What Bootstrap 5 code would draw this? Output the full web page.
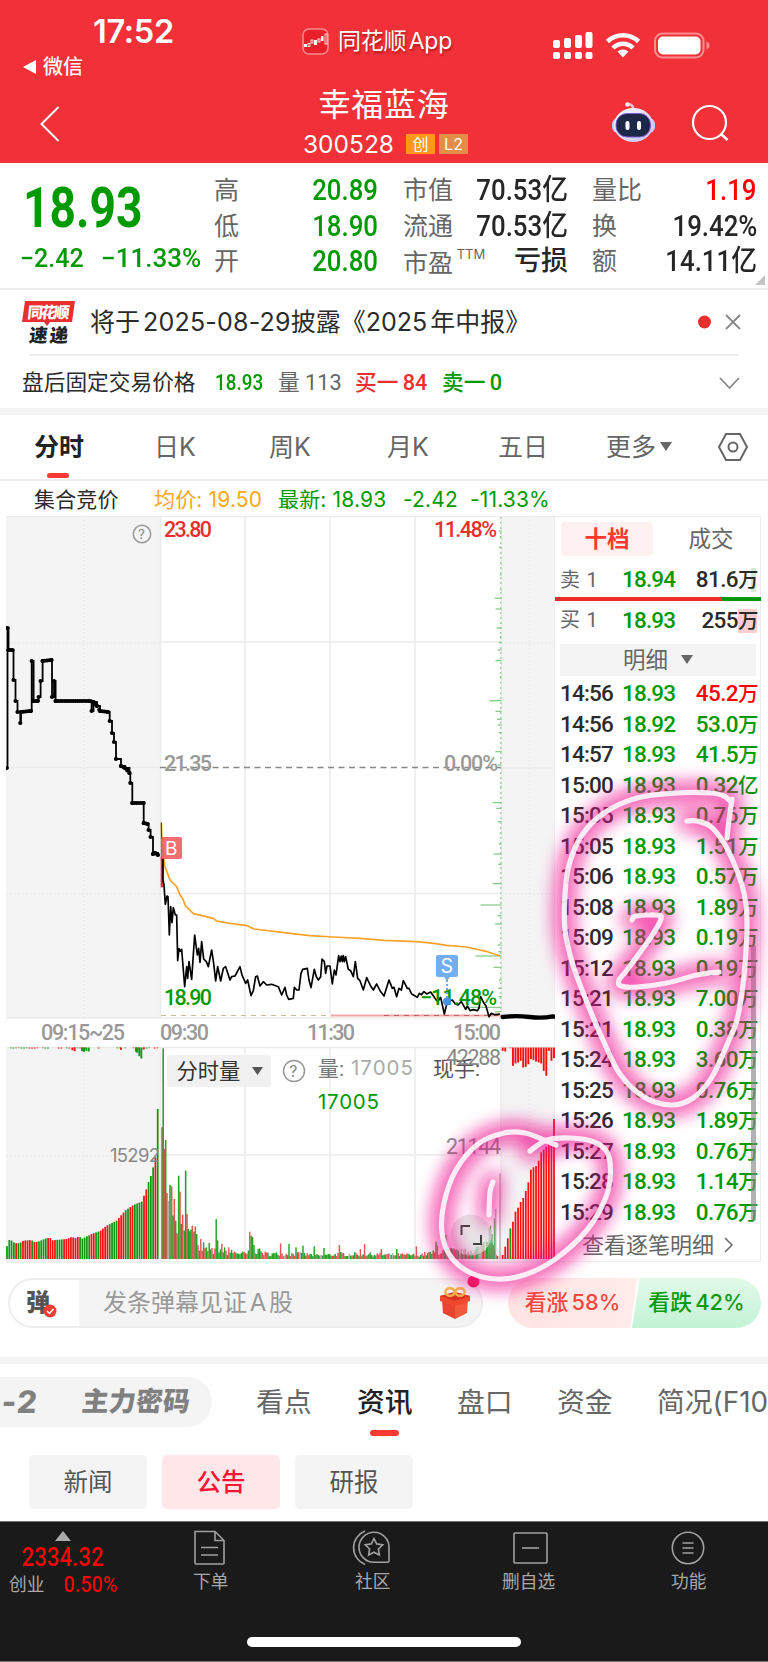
<!DOCTYPE html>
<html lang="zh-CN">
<head>
<meta charset="utf-8">
<meta name="viewport" content="width=device-width, initial-scale=1">
<title>幸福蓝海 300528</title>
<link href="https://cdn.jsdelivr.net/npm/bootstrap@5.3.0/dist/css/bootstrap.min.css" rel="stylesheet">
<style>
:root{--up:#e93030;--hot:#f00;--down:#009900;--ink:#2b2b2b;--mute:#666;--line:#eee;--soft:#f4f4f4}
body{width:768px;height:1662px;overflow:hidden;background:#fff;color:var(--ink);font-family:Inter,"Noto Sans CJK SC",sans-serif;line-height:1;position:relative}
svg{display:block;flex:none}
.t-down{color:var(--down)}.t-up{color:var(--up)}.t-hot{color:var(--hot)}.t-mute{color:var(--mute)}.t-ink{color:#262626}
.din{font-family:Roboto,"Noto Sans CJK SC",sans-serif;font-weight:500;display:inline-block;white-space:nowrap}
.from-l{transform-origin:0 50%}.from-r{transform-origin:100% 50%}
/* header */
.top{height:163px;background:#f23038;color:#fff}
.status{height:82px;grid-template-columns:302px 250px 1fr;display:grid}
.clock{font-size:32.5px;font-weight:600;letter-spacing:-.3px;padding-left:93px;height:35px;margin-top:15px}
.back-app{height:24px;font-size:20px;padding-left:23px;gap:7px;margin-top:5px;font-weight:500}
.app-name{font-size:23px;gap:9px;height:82px;text-shadow:1px 2px 2px rgba(120,0,0,.5);word-spacing:-4px;letter-spacing:-.2px}
.gauges{padding-top:32px}
.titlebar{height:81px;display:grid;grid-template-columns:263px 242px 263px}
.stock-name{font-size:32px;letter-spacing:.8px;margin-top:4px;line-height:37px}
.stock-code{font-size:24.5px;gap:4px;margin-top:8px;line-height:26px;padding-left:3px}
.tagbox{width:29px;height:20px;font-size:16px;line-height:20px;text-align:center;background:#ff9818;color:#fff}
.tagbox.l2{background:#e48c49}
/* quote */
.quote{height:127px;border-bottom:2px solid var(--line);display:grid;grid-template-columns:214px 164px 25px 165px 24px 165px;position:relative}
.last{font-size:55px;font-weight:700;color:var(--down);transform:scaleX(.84);margin:18px 0 0 23px;line-height:55px}
.chg{font-size:25.5px;color:var(--down);margin:10px 0 0 20px;display:flex}
.qcol{padding-top:10px}
.qcol>div{height:35.5px;display:flex;align-items:center;justify-content:space-between;font-size:25px;color:var(--mute);white-space:nowrap}
.qcol .din{font-size:29px;transform:scaleX(.89)}
.qcol .cn{transform:none;font-size:27px}
.ttm{font-size:13px;position:relative;top:-13px}
.corner{position:absolute;right:3px;bottom:3px}
/* notices */
.notice{height:64px;margin-left:22px;font-size:25px}
.notice .msg{margin-left:15px;width:608px;white-space:nowrap;word-spacing:-4px}
.thin{height:2px;background:var(--line);margin:0 29px}
.fixedrow{height:52px;padding:2px 28px 0 22px;font-size:21.7px}
.band{height:7px;background:var(--soft)}
/* chart tabs */
.ktabs{height:66px;border-bottom:2px solid var(--line);display:grid;grid-template-columns:34px 120px 115px 118px 111px 108px 111px 1fr;align-items:center;font-size:25px;color:var(--mute)}
.ktabs .on{color:#222;font-weight:600;position:relative}
.ktabs .on::after{content:"";position:absolute;left:13px;top:38px;width:22px;height:5px;border-radius:3px;background:#f93a32}
.legend-row{height:35px;font-size:21px;display:grid;grid-template-columns:34px 120px 124px 125px 67px 1fr;align-items:center;white-space:nowrap;letter-spacing:.15px}
.legend-row>*{padding-top:1px}
/* order book */
.book{width:206px;border:1px solid var(--line);border-left:0;height:746px}
.bk-tabs{height:45px;padding:5px 0 0 6px}
.bk-tabs>div{height:34px;width:92px;font-size:22.5px;line-height:34px;text-align:center;border-radius:4px}
.bk-tabs .on{color:#f93a32;background:#fff1f1;font-weight:600}
.lv,.tick{display:grid;grid-template-columns:62px 60px 76.5px;padding-left:5px;align-items:center;font-size:22.5px;font-family:Roboto,"Noto Sans CJK SC",sans-serif;font-weight:500;letter-spacing:-.85px;color:var(--ink)}
.lv>:last-child,.tick>:last-child{text-align:right;letter-spacing:-.6px;white-space:nowrap}
.lv i,.tick i{font-style:normal;font-size:20.5px;font-weight:500;letter-spacing:0}
.lv{height:36px}
.lv>:first-child{font-size:20px;font-weight:400;color:var(--mute);letter-spacing:.8px}
.bid i{background:linear-gradient(90deg,#fbcfcf 90%,transparent 90%)}.ask i{background:linear-gradient(90deg,transparent 60%,#cfeccf 60%,#cfeccf 88%,transparent 88%)}
.tick{height:30.5px}
.balance{height:4px;margin-right:-1px}
.more{height:32px;margin:5px 4px 2px 5px;background:var(--soft);font-size:22.5px;gap:13px;color:var(--mute)}
.book-foot{height:33px;font-size:22px;color:var(--mute);gap:10px;padding:3px 0 0 27px}
/* comments */
.talk{height:50px;margin:15px 7px 0 8px;word-spacing:-4px}
.talk-pill{width:475px;height:50px;border-radius:25px;border:2px solid var(--line);background:var(--soft);overflow:hidden;font-size:24px;color:#999}
.talk-pill .who{width:69px;height:46px;background:#fff;color:#555;font-weight:900;font-size:24px;padding-left:16px}
.vote{height:50px;width:129px;font-size:21.8px;font-weight:500;white-space:nowrap;word-spacing:-2.500px}
.vote.bull{background:linear-gradient(90deg,#ffe4e2,#ffeceb);color:#f5483f;border-radius:25px 0 0 25px;clip-path:polygon(0 0,100% 0,95% 100%,0 100%)}
.vote.bear{background:linear-gradient(#e2f9ea,#c3f3d5);color:#0a9a0a;border-radius:0 25px 25px 0;margin-left:-5px;clip-path:polygon(6% 0,100% 0,100% 100%,0 100%)}
/* info tabs */
.itabs{height:91px;display:grid;grid-template-columns:256px 101px 100px 100px 100px 1fr;font-size:27.8px;color:var(--mute);overflow:hidden;white-space:nowrap}
.itabs>div{line-height:50px;margin-top:13px}
.promo{background:var(--soft);width:212px;height:50px;border-radius:0 25px 25px 0;font-weight:800;color:#808080;display:grid;grid-template-columns:82px 1fr;font-size:27px}
.promo span{transform:skewX(-6deg)}
.promo span:first-child{font-size:31px;letter-spacing:1px;padding-left:2px}
.itabs .on{color:#222;font-weight:500;position:relative}
.itabs .on::after{content:"";position:absolute;left:13px;top:53px;width:29px;height:6px;border-radius:3px;background:#f93a32}
.chips{gap:15px;padding-left:29px;height:66px}
.chips>div{width:118px;height:54px;border-radius:5px;background:var(--soft);text-align:center;line-height:55px;font-size:24.5px;color:#555}
.chips .on{background:#ffe7e9;color:#fb1433;font-weight:500}
/* bottom */
.dock{height:141px;background:#1a1a1a;color:#a8a8a8;border-bottom:1px solid #777;border-top:1px solid #777;position:relative}
.dock-grid{display:grid;grid-template-columns:131px 161px 160px 157px 159px;font-size:17.7px}
.dock-grid .cell{height:76px}
.dock-grid .cap{margin-top:7px}
.home{width:274px;height:10px;border-radius:5px;background:#fff;margin:39px 0 0 247px}
.ink-layer{position:absolute;left:0;top:0;pointer-events:none}
</style>
</head>
<body>
<header class="top">
  <div class="status">
    <div>
      <div class="clock d-flex align-items-center">17:52</div>
      <div class="back-app d-flex align-items-center"><svg width="13" height="16"><path d="M13 1v14L0 8z" fill="#fff"/></svg>微信</div>
    </div>
    <div class="app-name d-flex align-items-center">
      <svg width="27" height="27" viewBox="0 0 27 27"><rect x="1" y="1" width="25" height="25" rx="6" fill="#e8202a" stroke="#f88d90" stroke-width="1.5"/><g fill="#fff"><rect x="2" y="16" width="3" height="3"/><rect x="12" y="12" width="3" height="5"/><rect x="19" y="8" width="2.500" height="5"/></g><g fill="none" stroke="#fff" stroke-width=".8"><rect x="6" y="15.500" width="2" height="3"/><rect x="9" y="12" width="2" height="3"/><rect x="16" y="11" width="2" height="3"/><rect x="23" y="6" width="2" height="10"/></g></svg>
      <span>同花顺 App</span>
    </div>
    <div class="gauges">
      <svg width="180" height="30" viewBox="552 32 180 30"><g fill="#fff"><rect x="553" y="40" width="7" height="8" rx="2"/><rect x="564" y="38" width="7" height="10" rx="2"/><rect x="575" y="35" width="7" height="13" rx="2"/><rect x="585.500" y="32" width="7" height="16" rx="2"/><rect x="553" y="52" width="7" height="7" rx="2"/><rect x="564" y="52" width="7" height="7" rx="2"/><rect x="575" y="52" width="7" height="7" rx="2"/><rect x="585.500" y="52" width="7" height="7" rx="2"/><path d="M623 57.500l-5.500-6a8.500 8.500 0 0 1 11 0z"/></g><g fill="none" stroke="#fff" stroke-width="4.600"><path d="M607.500 41.500a22.500 22.500 0 0 1 31 0"/><path d="M613 48a14 14 0 0 1 20 0"/></g><rect x="655" y="33.500" width="48.500" height="24" rx="7.500" fill="none" stroke="#f98d91" stroke-width="2"/><rect x="658" y="36.500" width="42.500" height="18" rx="5" fill="#fff"/><path d="M706.500 41.500q3 1 3 4t-3 4z" fill="#f98d91"/></svg>
    </div>
  </div>
  <div class="titlebar">
    <div class="pt-4"><svg width="70" height="36" viewBox="0 0 70 36"><path d="M58.500 1L41.500 18l17 17" fill="none" stroke="#fff" stroke-width="2"/></svg></div>
    <div class="text-center">
      <div class="stock-name">幸福蓝海</div>
      <div class="stock-code d-flex align-items-center justify-content-center"><span class="me-2">300528</span><span class="tagbox">创</span><span class="tagbox l2">L2</span></div>
    </div>
    <div class="d-flex">
      <svg width="263" height="81" viewBox="505 82 263 81"><defs><linearGradient id="bot" x2="1" y2="1"><stop stop-color="#fff"/><stop offset="1" stop-color="#c6c0ee"/></linearGradient></defs><path d="M633 110q1-6-6-6" fill="none" stroke="#f7c3cd" stroke-width="2.500"/><circle cx="627.500" cy="104.500" r="2.300" fill="#efe8ff"/><rect x="612" y="118" width="43" height="15" rx="6" fill="#cbc8f3"/><ellipse cx="633.500" cy="125" rx="19.500" ry="17" fill="url(#bot)"/><rect x="616" y="113.500" width="34.500" height="23.500" rx="11" fill="#1d2747" stroke="#7b5cd6"/><rect x="625.500" y="121" width="4" height="9" rx="2" fill="#fff"/><rect x="637" y="121" width="4" height="9" rx="2" fill="#fff"/><circle cx="709.500" cy="122.500" r="16.500" fill="none" stroke="#fff" stroke-width="2.200"/><path d="M720.500 133.500l7 6.500" stroke="#fff" stroke-width="2.500"/></svg>
    </div>
  </div>
</header>

<section class="quote">
  <div><div class="din last from-l">18.93</div>
    <div class="chg"><span class="din from-l" style="width:81px;transform:scaleX(.98)">−2.42</span><span class="din from-l" style="transform:scaleX(1.02)">−11.33%</span></div></div>
  <div class="qcol"><div>高<span class="din from-r t-down">20.89</span></div><div>低<span class="din from-r t-down">18.90</span></div><div>开<span class="din from-r t-down">20.80</span></div></div>
  <div></div>
  <div class="qcol"><div>市值<span class="din from-r t-ink">70.53亿</span></div><div>流通<span class="din from-r t-ink">70.53亿</span></div><div><span class="pt-1">市盈<span class="ttm"> TTM</span></span><span class="din cn t-ink">亏损</span></div></div>
  <div></div>
  <div class="qcol"><div>量比<span class="din from-r t-hot">1.19</span></div><div>换<span class="din from-r t-ink">19.42%</span></div><div>额<span class="din from-r t-ink">14.11亿</span></div></div>
  <svg class="corner" width="10" height="10"><path d="M10 0v10H0z" fill="#c4c4c4"/></svg>
</section>

<section class="notice d-flex align-items-center">
  <svg width="53" height="45" viewBox="0 0 53 45"><path d="M3 1h50l-3 21H28l-3 4-3-4H0z" fill="#e93030"/><g font-family="Noto Sans CJK SC" font-weight="900"><text transform="skewX(-6)" x="7" y="18" font-size="15.500" fill="#fff" textLength="42">同花顺</text><text transform="skewX(-6)" x="11" y="42" font-size="18.500" fill="#222" textLength="39">速递</text></g></svg>
  <div class="msg">将于 <span style="letter-spacing:.2px">2025-08-29</span>披露《2025 年中报》</div>
  <svg width="44" height="16" viewBox="0 0 44 16"><circle cx="6.500" cy="8" r="6.500" fill="#e93030"/><path d="M28 1l14 14M42 1L28 15" stroke="#888" stroke-width="1.800"/></svg>
</section>
<div class="thin"></div>
<section class="fixedrow d-flex align-items-center">
  <span style="width:193px">盘后固定交易价格</span>
  <span class="din t-down from-l" style="width:63px;transform:scaleX(.87)">18.93</span>
  <span class="din t-mute" style="width:77px;font-weight:400">量 113</span>
  <span class="din t-up" style="width:87px;word-spacing:-1px">买一 84</span>
  <span class="din t-down" style="word-spacing:-1px">卖一 0</span>
  <svg class="ms-auto" width="21" height="13"><path d="M1 1l9.500 10L20 1" fill="none" stroke="#888" stroke-width="1.800"/></svg>
</section>
<div class="band"></div>

<nav class="ktabs"><i></i><div class="on">分时</div><div>日K</div><div>周K</div><div>月K</div><div>五日</div><div class="d-flex align-items-center gap-1">更多<svg width="12" height="10"><path d="M0 0h12L6 9z" fill="#666"/></svg></div>
  <svg width="32" height="30" viewBox="0 0 32 30"><path d="M9 2h14l7 13-7 13H9L2 15z" fill="none" stroke="#666" stroke-width="2"/><circle cx="16" cy="15" r="4.500" fill="none" stroke="#666" stroke-width="2"/></svg></nav>
<div class="legend-row"><i></i><span>集合竞价</span><span style="color:#f7a81d">均价: 19.50</span><span class="t-down">最新: 18.93</span><span class="t-down">-2.42</span><span class="t-down">-11.33%</span></div>

<main class="d-flex" style="padding-left:6px">
  <svg id="chart" width="549" height="747" viewBox="6 516 549 747" font-family="Roboto, 'Noto Sans CJK SC', sans-serif">
    <g fill="#f4f4f4"><path d="M6 516h154.500v502H6zM501 516h54v502h-54zM6 1047h154.500v214H6zM501 1047h54v214h-54z"/></g>
    <g fill="none" stroke="#ececec" stroke-width="1.500"><path d="M6 516.500h549M6 1018h549M6 1047.500h549M6 1262h549M160.500 516v502M245 516v502M330 516v502M415 516v502M501.500 516v502M160.500 642h341M160.500 893.500h341M160.500 1047v215M245 1047v215M330 1047v215M415 1047v215M501 1047v215M160.500 1155h341M6 767.500h154M501 768h54M555 516v747"/><path stroke-dasharray="2 2" d="M84 516v502M6 643h154M6 894h154M529.500 516v502M501 643h54M501 894h54M84 1047v214M529.500 1047v214M6 1156h154M501 1156h54"/></g>
    <g font-size="21.500" font-weight="500">
      <path d="M160 767.500h341" stroke="#888" stroke-width="1.300" stroke-dasharray="6 4.500"/>
      <text x="164" y="537" fill="#e93030" textLength="48">23.80</text><text x="434" y="537" fill="#e93030" textLength="63">11.48%</text>
      <text x="164" y="771" fill="#999" textLength="48">21.35</text><text x="444" y="771" fill="#999" textLength="54">0.00%</text>
      <text x="164" y="1005" fill="#009900" textLength="48">18.90</text>
      <g fill="#999"><text x="41" y="1040" textLength="84">09:15~25</text><text x="160" y="1040" textLength="49">09:30</text><text x="307" y="1040" textLength="48">11:30</text><text x="453" y="1040" textLength="48">15:00</text></g>
    </g>
    <path d="M161 1015.500h170" stroke="#cdbb93" stroke-width="1.200" stroke-dasharray="5 5"/><path d="M331 1015.500h170" stroke="#f0a5a5" stroke-width="1.800"/><path d="M384 1015.500h117" stroke="#c06060" stroke-width="1" stroke-dasharray="5 5"/>
    <g id="ladder" stroke="#8acb8a" stroke-width="1.300"></g>
    <g id="bars"></g>
    <path id="auction" fill="none" stroke="#000" stroke-width="1.800"/><g id="dots"></g>
    <g transform="translate(0 760) scale(.33333)" fill="none" stroke-linejoin="round">
      <path id="avg" stroke="#f7a32a" stroke-width="5"/><path d="M484 187v115" stroke="#333" stroke-width="3"/><path d="M486 290v92" stroke="#e93030" stroke-width="8"/><path id="price" stroke="#000" stroke-width="5"/>
      <path d="M1508 771q40-5 80 0t70-2q20 3 29-6" stroke="#000" stroke-width="13" stroke-linecap="round"/>
    </g>
    <text x="420" y="1005" fill="#009900" font-size="21.500" font-weight="500" textLength="77">−11.48%</text>
    <rect x="161" y="837" width="21" height="22" rx="2" fill="#f0595c" opacity=".88"/><text x="165" y="855" font-size="19" fill="#fff" font-family="Inter">B</text>
    <path d="M447 976v24" stroke="#6aa5ef" stroke-width="2" stroke-dasharray="2 2"/><circle cx="447" cy="1001.500" r="4" fill="#4c8fe6"/><path d="M436 957a2 2 0 0 1 2-2h18a2 2 0 0 1 2 2v18a2 2 0 0 1-2 2h-6l-3 4-3-4h-6a2 2 0 0 1-2-2z" fill="#73aef3"/><text x="440.500" y="973" font-size="19.500" fill="#fff" font-family="Inter">S</text>
    <g fill="none" stroke="#999" stroke-width="1.500"><circle cx="142" cy="534" r="8.700"/><circle cx="294" cy="1071" r="10.500"/></g>
    <g fill="#888" font-family="Inter"><text x="138" y="539" font-size="13.500">?</text><text x="289.300" y="1077" font-size="16">?</text></g>
    <rect x="167" y="1055" width="104" height="32" rx="3" fill="#f1f1f1"/><text x="176.500" y="1079" font-size="21.300" fill="#333">分时量</text><path d="M252 1067h11l-5.500 8z" fill="#555"/>
    <g font-size="21"><text x="318" y="1076" fill="#777">量:</text><text x="351" y="1075" fill="#aaa" font-family="Inter" font-size="20.500" textLength="62">17005</text><text x="433" y="1076" fill="#555">现手:</text><text x="318" y="1109" fill="#009900" font-family="Inter" font-size="20.500" textLength="61">17005</text></g>
    <g fill="#888"><text x="446" y="1065" font-size="21.500" textLength="55">42288</text><text x="446" y="1154" font-size="21.500" textLength="55">21144</text><text x="110" y="1162" font-size="18.500" font-family="Inter" textLength="50">15292</text></g>
    <circle cx="471" cy="1235" r="20.500" fill="#ddd" opacity=".72"/><path d="M461.500 1235v-9h8.500M473 1244h8v-9" fill="none" stroke="#444" stroke-width="2"/>
  </svg>
  <aside class="book">
    <div class="bk-tabs d-flex"><div class="on">十档</div><div class="t-mute" style="margin-left:12px">成交</div></div>
    <div class="lv ask" style="height:35px"><span>卖 1</span><span class="t-down">18.94</span><span>81.6<i>万</i></span></div>
    <div class="balance d-flex"><div style="width:81%;background:#ee2e2e"></div><div style="width:19%;background:#0a960a"></div></div>
    <div class="lv bid" style="height:38px"><span>买 1</span><span class="t-down">18.93</span><span>255<i>万</i></span></div>
    <div class="more d-flex align-items-center justify-content-center">明细<svg width="12" height="10"><path d="M0 0h12L6 9z" fill="#666"/></svg></div>
    <div id="ticks"></div>
    <div class="book-foot d-flex align-items-center">查看逐笔明细<svg width="9" height="16"><path d="M1 1l7 7-7 7" fill="none" stroke="#666" stroke-width="1.500"/></svg></div>
  </aside>
</main>

<section class="talk d-flex">
  <div class="talk-pill d-flex align-items-center">
    <div class="who d-flex align-items-center"><span>弹</span><svg width="14" height="14" style="margin:16px 0 0 -7px"><circle cx="7" cy="7" r="6.500" fill="#f03c2e"/><path d="M4 7l2.500 2.500L10.500 5" fill="none" stroke="#fff" stroke-width="1.500"/></svg></div>
    <span style="margin-left:24px;width:336px">发条弹幕见证 A 股</span>
    <svg width="32" height="34" viewBox="0 0 32 34"><path d="M3 14l13 4v15L4 27z" fill="#e8432c"/><path d="M29 14l-13 4v15l12-6z" fill="#f2583a"/><path d="M1 10l15-4 15 4v5l-15 5-15-5z" fill="#f0492e"/><path d="M1 10l15-4 15 4-15 5z" fill="#d83422"/><g fill="none" stroke="#f5b24a" stroke-width="2.500"><ellipse cx="11" cy="6" rx="4.500" ry="3.800"/><ellipse cx="21" cy="6" rx="4.500" ry="3.800"/></g></svg>
  </div>
  <div class="vote bull d-flex align-items-center justify-content-center" style="margin-left:25px">看涨 58%</div>
  <div class="vote bear d-flex align-items-center justify-content-center">看跌 42%</div>
</section>
<div class="band" style="margin-top:29px"></div>

<nav class="itabs"><div class="promo"><span>-2</span><span>主力密码</span></div><div>看点</div><div class="on">资讯</div><div>盘口</div><div>资金</div><div>简况(F10)</div></nav>
<div class="chips d-flex"><div>新闻</div><div class="on">公告</div><div>研报</div></div>

<footer class="dock">
  <div class="dock-grid">
    <div class="cell"><svg style="margin:9px 0 0 55px" width="16" height="10"><path d="M8 0l8 10H0z" fill="#aaa"/></svg>
      <div class="din t-hot from-l d-block" style="font-size:25px;margin:4px 0 0 22px;transform:scaleX(.89);height:27px">2334.32</div>
      <div class="d-flex align-items-center" style="padding:2px 0 0 9px"><span style="width:55px">创业</span><span class="din t-hot from-l" style="font-size:21.500px;transform:scaleX(.92)">0.50%</span></div></div>
    <div class="cell" style="padding:7px 0 0 62px"><svg width="34" height="37" fill="none" stroke="#a0a0a0" stroke-width="1.600"><path d="M2 2.500h20l9 9V34a1 1 0 0 1-1 1H3a1 1 0 0 1-1-1zM22 2.500v9h9M8 18.500h17M8 26h17"/></svg><div class="cap">下单</div></div>
    <div class="cell" style="padding:7px 0 0 60px"><svg width="40" height="37" fill="none" stroke="#a0a0a0" stroke-width="1.600"><path d="M37 18.500a15 15 0 1 0-15 14.800h13.500q1.500 0 1.500-1.500zM13 2A18 18 0 0 0 13 35.500"/><path d="M22 9.500l2.700 5.400 6 .9-4.300 4.200 1 6-5.400-2.800-5.400 2.800 1-6-4.300-4.200 6-.9z"/></svg><div class="cap" style="padding-left:3px">社区</div></div>
    <div class="cell" style="padding:7px 0 0 50px"><svg class="ms-2" width="40" height="37" fill="none" stroke="#a0a0a0" stroke-width="1.600"><rect x="4" y="4" width="33" height="30" rx="1"/><path d="M12 19h17"/></svg><div class="cap">删自选</div></div>
    <div class="cell" style="padding:7px 0 0 62px"><svg width="36" height="37" fill="none" stroke="#a0a0a0" stroke-width="1.600"><circle cx="17" cy="19" r="15.700"/><path d="M11.500 14h11M11.500 19h11M11.500 24h11"/></svg><div class="cap">功能</div></div>
  </div>
  <div class="home"></div>
</footer>

<svg class="ink-layer" width="768" height="1662">
  <defs><filter id="glow" x="-20%" y="-20%" width="140%" height="140%"><feGaussianBlur stdDeviation="9"/></filter></defs>
  <rect x="751" y="945" width="5" height="276" rx="2" fill="#888" opacity=".65"/>
  <circle cx="473.500" cy="1281.500" r="6" fill="#f01c4c"/>
  <g id="halo" fill="none" stroke="#f0108f" stroke-width="20" stroke-linecap="round" stroke-linejoin="round" filter="url(#glow)" opacity=".74"></g>
  <g id="pen" fill="none" stroke="#fff" stroke-width="5.200" stroke-linecap="round" stroke-linejoin="round" opacity=".86"></g>
</svg>

<script>
const $ = id => document.getElementById(id);
const rows = `14:56 18.93 45.2万 u|14:56 18.92 53.0万|14:57 18.93 41.5万|15:00 18.93 0.32亿|15:05 18.93 0.76万|15:05 18.93 1.51万|15:06 18.93 0.57万|15:08 18.93 1.89万|15:09 18.93 0.19万|15:12 18.93 0.19万|15:21 18.93 7.00万|15:21 18.93 0.38万|15:24 18.93 3.60万|15:25 18.93 0.76万|15:26 18.93 1.89万|15:27 18.93 0.76万|15:28 18.93 1.14万|15:29 18.93 0.76万`;
$('ticks').innerHTML = rows.split('|').map(r => { const [t,p,v,u] = r.split(' ');
  return `<div class="tick"><span>${t}</span><span class="t-down">${p}</span><span class="${u?'t-hot':'t-down'}">${v.slice(0,-1)}<i>${v.slice(-1)}</i></span></div>`}).join('');

const line = s => 'M' + s.trim().replace(/ /g,'L');
/* call auction steps */
const au = '6.7,768 7.5,628 8.5,650 12.5,650 13.5,680 15.5,701 17.5,712 20.3,723 21,712 31,711 31.7,661 33.6,701 37.6,701 38.6,697 40.6,681 42.6,661 51.5,660 52,697 54,681 55.6,701 90.6,701 91.6,711 93.5,702 97,706 100,711 108,712 109.7,721 112,733 114,742 116,759 121,766 125,768 129.5,773 130.3,783 132.3,803 143.6,803 143.7,823 147.6,824 148.6,830 150.6,837 153,854 155,853 158,855'.split(' ').map(p=>p.split(',').map(Number));
let d = 'M'+au[0], dots = '';
au.forEach(([x,y],i) => { if(i){ d += `H${x}V${y}`; const [a,b]=au[i-1];
  if(Math.abs(y-b)<6) for(let q=a;q<x;q+=2.2) dots+=`<circle cx="${q}" cy="${b+(y-b)*(q-a)/(x-a)}" r="2"/>`; }
  dots += `<circle cx="${x}" cy="${y}" r="2.1"/>`; });
$('auction').setAttribute('d', d); $('dots').innerHTML = dots;
/* intraday */
$('avg').setAttribute('d', line('484,190 487,270 495,320 510,360 530,380 540,405 549,418 556,437 580,461 640,475 650,483 690,490 742,497 762,507 870,520 930,527 1000,531 1080,535 1152,541 1250,545 1302,550 1340,556 1400,561 1458,574 1500,588'));
$('price').setAttribute('d', line('489,295 489,360 492,375 496,433 501,408 504,410 508,525 512,440 516,488 520,443 526,465 530,465 533,602 537,566 541,574 545,568 554,680 560,620 563,655 567,605 575,658 584,525 592,585 596,565 600,607 605,545 611,597 619,605 625,620 635,570 641,610 647,663 653,620 662,663 670,625 677,620 690,660 695,650 705,648 720,620 726,645 737,670 743,660 753,707 760,692 767,650 772,648 780,678 790,665 800,675 815,673 835,680 845,705 855,682 860,705 866,718 880,715 883,682 890,690 897,690 903,640 908,628 922,625 927,660 933,683 943,628 949,650 955,660 962,650 966,597 973,605 977,640 981,618 990,618 997,672 1003,630 1008,645 1016,587 1020,605 1024,588 1027,605 1030,587 1033,605 1037,590 1045,628 1052,632 1060,650 1066,605 1073,655 1080,662 1090,690 1100,653 1112,678 1120,690 1130,672 1140,692 1152,708 1167,660 1177,685 1182,682 1190,710 1197,685 1204,690 1210,662 1222,685 1227,685 1235,702 1252,712 1258,700 1264,704 1272,695 1280,702 1292,696 1305,715 1313,725 1322,712 1333,762 1342,725 1357,720 1366,732 1374,735 1384,725 1397,748 1402,738 1410,752 1420,749 1432,752 1437,745 1442,710 1452,730 1458,738 1467,770 1474,760 1484,764 1500,762'));
/* price-volume ladder on the right edge */
let L = [[63,8],[80,6],[112,8],[160,4],[195,5],[240,5],[265,20],[297,18],[340,4],[354,15],[380,5],[397,8],[420,12],[452,18],[500,6],[572,36],[604,18],[628,14],[645,12],[668,8],[725,18],[765,12]].map(([y,l])=>[510+y/3,l/3])
 .concat([[50,5],[98,26],[115,16],[155,12],[190,5],[222,8],[252,24],[283,10],[341,26],[405,63],[437,12],[462,20],[525,12],[545,10],[558,78],[592,24],[630,8],[655,10],[680,8],[712,100],[725,20]].map(([y,l])=>[770+y/3,l/3]));
for(let y=518;y<1012;y+=5) L.push([y,1.5]);
$('ladder').innerHTML = L.map(([y,l])=>`<path d="M${501.5-l} ${y}H501.500"/>`).join('');
/* volume */
let s = 7; const rnd = () => (s = (s*16807)%2147483647)/2147483647;
const lerp = (pts,x) => { for(let i=1;i<pts.length;i++) if(x<=pts[i][0]){const [a,b]=pts[i-1],[c,e]=pts[i];return b+(e-b)*(x-a)/(c-a)} return pts.at(-1)[1] };
const R='#fb0f0f', G='#0f980f'; let B='';
const bar=(x,h,c,w,o=1)=>B+=`<rect x="${x-w/2}" y="${1259-h}" width="${w}" height="${h}" fill="${c}" opacity="${o}"/>`;
const drop=(x,h,c,w)=>B+=`<rect x="${x-w/2}" y="1047.500" width="${w}" height="${h}" fill="${c}"/>`;
const env=[[20,35],[26,57],[34,56],[45,47],[60,48],[70,55],[95,57],[100,51],[115,52],[135,61],[150,64],[156,56],[200,60],[215,66],[230,62],[237,70],[245,60],[275,75],[300,84],[320,100],[350,115],[375,145],[400,162],[425,172],[432,190],[440,212],[447,235],[453,250],[460,277],[467,308],[473,450]];
const reds=[[42,50],[68,90],[98,112],[142,170],[188,240],[270,282],[298,323],[354,373],[386,400],[429,442],[464,470]];
for(let i=0;i<67;i++){const x=21+i*6.85; bar(x/3,lerp(env,x)/3,reds.some(r=>x>=r[0]&&x<=r[1])?R:G,1.75)}
[[486,395,1],[489.500,632,0],[493,330,1],[497,357,0],[501,198,1],[505,175,2],[510,222,0],[515,218,1],[519,130,0],[523,180,1],[527,115,0],[531,77,1],[536,250,0],[540,202,1],[544,105,0],[548,133,1],[553,85,0],[557,265,0],[561,135,1],[565,90,0],[569,83,0],[573,88,0],[577,100,1],[582,82,0],[586,98,1],[590,75,0]].forEach(([x,h,c])=>bar(x/3,h/3,[G,'#e04444','#aaa'][c],1.6,.9));
const spikes={594:42,603:60,611:50,628:48,649:120,653:56,666:45,674:35,687:35,750:82,754:70,758:66,763:42,775:30,843:47,868:45,889:35,910:40,944:38,973:33,1020:42,1083:30,1092:45,1146:30,1190:30,1248:38,1307:52,1311:40,1337:72,1341:42};
const base=[[590,40],[640,28],[700,24],[740,18],[760,34],[800,18],[900,18],[960,12],[1020,18],[1150,16],[1250,14],[1300,22],[1340,30],[1400,26],[1440,40],[1465,60],[1480,70],[1492,8]];
for(let x=594;x<1493;x+=4.2){ let h=lerp(base,x)*(.45+.75*rnd()), c=rnd(); for(const k in spikes) if(Math.abs(k-x)<2.1) h=spikes[k], c=k%3?.2:.7; if(c>.94)c='#aaa'; else c=c<.55?G:'#e04444'; bar(x/3,h/3,c,1.45,.9)}
[[1468,95],[1472,100],[1476,75],[1483,122],[1487,150],[1500,257]].forEach(([x,h])=>bar(x/3,h/3,x>1485?'#aaa':'#5fa45f',1.4,.9));
[12,37,62,92,112,142,154,171,183,204,230,268,275,279,295,320,328,337,348,350,420].forEach((h,i)=>bar((1508+i*7.7)/3,h/3,i==3?G:R,1.75));
[10,12,0,2,55,48,45,40,60,58,50,35,38,42,45,48,70,85,10,40,32].forEach((h,i)=>h&&drop((1508+i*7.7)/3,h/3,R,1.9));
for(let x=32;x<480;x+=8) if(rnd()>.4) drop(x/3,.6+rnd()*.5,rnd()>.5?R:G,1.7);
[[217,8,1],[224,11,1],[246,11,0],[252,13,0],[259,10,0],[266,12,0],[363,7,1],[408,13,0],[412,16,0],[418,26,0],[424,33,0],[431,6,1]].forEach(([x,h,c])=>drop(x/3,h/3,c?R:G,1.9));
$('bars').innerHTML=B;
/* freehand strokes, smoothed */
const strokes=['687,821 697,821 710,826 722,840 733,861 742,885 746,905 747,925 746,950 743,985 737,1020 729,1040 712,1077 693,1098 671,1105 644,1097 620,1074 603,1040 588,1005 573,965 565,930 565,895 569,865 582,835 604,813 637,798 677,793 711,793 724,796 730,801',
'732,799 729,820 727,838','632,920 636,916 657,915 661,919 651,937 627,970 619,980 621,986 637,987 667,983 697,975 719,972',
'530,1151 547,1140 571,1138 594,1142 607,1152 610.5,1172 606,1197 587,1230 554,1260 524,1275 497,1279 471,1273 451,1257 442,1233 444,1203 456,1170 478,1144 504,1133 525,1133 544,1140 556,1145','493,1182 490,1192 489,1215'];
const smooth=t=>{const p=t.split(' ').map(q=>q.split(',').map(Number));let o='M'+p[0];for(let i=0;i<p.length-1;i++){const a=p[i-1]||p[i],b=p[i],c=p[i+1],e=p[i+2]||c;o+=`C${b[0]+(c[0]-a[0])/6} ${b[1]+(c[1]-a[1])/6} ${c[0]-(e[0]-b[0])/6} ${c[1]-(e[1]-b[1])/6} ${c}`}return o};
$('halo').innerHTML=$('pen').innerHTML=strokes.map(t=>`<path d="${smooth(t)}"/>`).join('');
</script>
<script src="https://cdn.jsdelivr.net/npm/bootstrap@5.3.0/dist/js/bootstrap.bundle.min.js"></script>
</body>
</html>
